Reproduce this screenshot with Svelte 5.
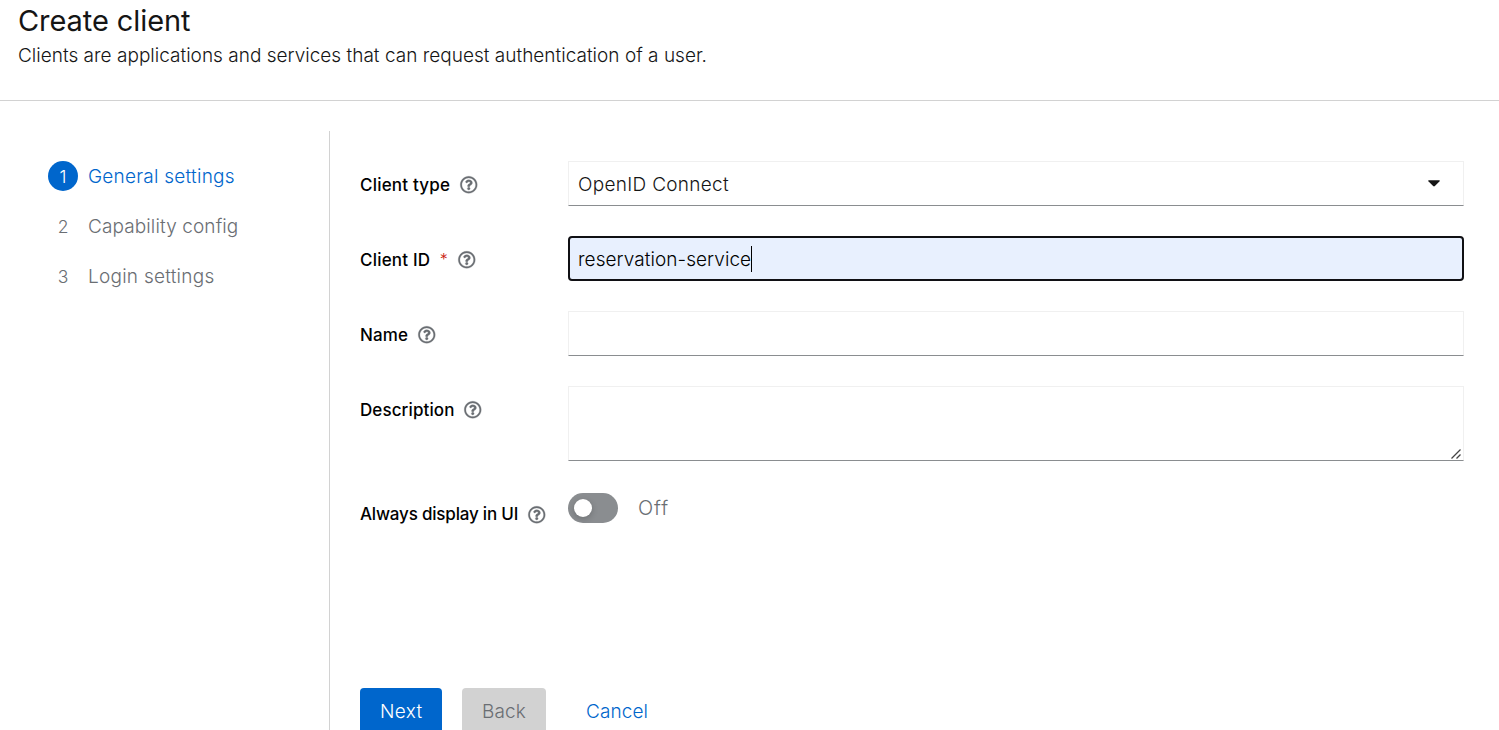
<script>
  const steps = [
    { label: 'General settings', tracking: 0.24 },
    { label: 'Capability config', tracking: 0.11 },
    { label: 'Login settings', tracking: 0.25 }
  ];
  let current = $state(0);
</script>

{#snippet help()}
  <svg class="help" viewBox="0 0 512 512" aria-hidden="true">
    <path d="M256 8C119.043 8 8 119.083 8 256c0 136.997 111.043 248 248 248s248-111.003 248-248C504 119.083 392.957 8 256 8zm0 448c-110.532 0-200-89.431-200-200 0-110.495 89.472-200 200-200 110.491 0 200 89.471 200 200 0 110.53-89.431 200-200 200zm107.244-255.2c0 67.052-72.421 68.084-72.421 92.863V300c0 6.627-5.373 12-12 12h-45.647c-6.627 0-12-5.373-12-12v-8.659c0-35.745 27.1-50.034 47.579-61.516 17.561-9.845 28.324-16.541 28.324-29.579 0-17.246-21.999-28.693-39.784-28.693-23.189 0-33.894 10.977-48.942 29.969-4.057 5.12-11.46 6.071-16.666 2.124l-27.824-21.098c-5.107-3.872-6.251-11.066-2.644-16.363C184.846 131.491 214.94 112 261.794 112c49.071 0 101.45 38.304 101.45 88.8zM298 368c0 23.159-18.841 42-42 42s-42-18.841-42-42 18.841-42 42-42 42 18.841 42 42z" />
  </svg>
{/snippet}

<div class="page">
  <header>
    <h1>Create client</h1>
    <p>Clients are applications and services that can request authentication of a user.</p>
  </header>
  <div class="wizard">
    <nav>
      {#each steps as step, i}
        <div class="step" class:active={i === current}>
          <span class="num">{i + 1}</span><span style="letter-spacing: {step.tracking}px">{step.label}</span>
        </div>
      {/each}
    </nav>
    <main>
      <form>
        <div class="row">
          <div class="label"><span>Client type</span>{@render help()}</div>
          <div class="control select"><span>OpenID Connect</span>
            <svg class="caret" viewBox="0 0 12 7"><path d="M0.8 0.2H11.2Q12.2 0.4 11.6 1.2L6.9 6.1Q6 6.9 5.1 6.1L0.4 1.2Q-0.2 0.4 0.8 0.2Z" /></svg>
          </div>
        </div>
        <div class="row">
          <div class="label"><span>Client ID</span><span class="req">*</span>{@render help()}</div>
          <div class="control focused"><span>reservation-service</span><i class="cursor"></i></div>
        </div>
        <div class="row">
          <div class="label name"><span>Name</span>{@render help()}</div>
          <div class="control"></div>
        </div>
        <div class="row">
          <div class="label description"><span>Description</span>{@render help()}</div>
          <div class="control area">
            <svg class="grip" viewBox="0 0 10 10"><path d="M0.5 9.5L9.5 0.5M5.5 9.5L9.5 5.5" /></svg>
          </div>
        </div>
        <div class="row">
          <div class="label always"><span>Always display in UI</span>{@render help()}</div>
          <div class="toggle"><span class="track"><span class="knob"></span></span><span class="off">Off</span></div>
        </div>
      </form>
      <footer>
        <button class="primary">Next</button>
        <button class="disabled">Back</button>
        <button class="link">Cancel</button>
      </footer>
    </main>
  </div>
</div>

<style>
  :global(body) { background: #fff; }
  .page { height: 730px; overflow: hidden; display: flex; flex-direction: column; font-family: Inter, sans-serif; font-size: 19px; font-weight: 300; color: #151515; }
  header { box-sizing: border-box; flex: none; height: 101px; padding: 2px 18px 0; border-bottom: 1px solid #d2d2d2; }
  h1 { margin: 0; font-size: 29px; line-height: 37px; font-weight: 400; letter-spacing: -0.08px; }
  p { margin: 0; line-height: 34px; letter-spacing: 0.012px; }
  .wizard { flex: 1; display: flex; margin-top: 30px; }
  nav { box-sizing: border-box; width: 330px; padding: 30px 0 0 48px; border-right: 1px solid #d2d2d2; display: flex; flex-direction: column; gap: 20px; }
  .step { display: flex; align-items: center; gap: 10px; height: 30px; color: #6a6e73; }
  .num { width: 30px; height: 30px; border-radius: 50%; text-align: center; line-height: 31px; font-size: 17.5px; }
  .active { color: #06c; }
  .active .num { background: #06c; color: #fff; }
  main { flex: 1; display: flex; flex-direction: column; padding: 30px 35px 0 30px; }
  form { height: 527px; flex: none; display: flex; flex-direction: column; gap: 30px; }
  .row { display: grid; grid-template-columns: 208px 1fr; }
  .label { display: flex; align-items: center; height: 47px; margin-bottom: -2px; font-size: 17px; font-weight: 500; letter-spacing: 0.2px; color: #000; }
  .name { letter-spacing: 0.1px; }
  .description { letter-spacing: 0.1px; }
  .always { letter-spacing: -0.19px; }
  .always span { margin-bottom: 2px; }
  .help { width: 17.5px; height: 17.5px; fill: #6a6e73; stroke: #6a6e73; stroke-width: 8; overflow: visible; margin-left: 9.8px; }
  .req { color: #c9190b; font-size: 16px; font-weight: 300; margin: 0 0 1px 9.5px; }
  .control { box-sizing: border-box; height: 45px; border: 1px solid #f0f0f0; border-bottom-color: #8a8d90; display: flex; align-items: center; padding: 1px 9px 0; }
  .select { justify-content: space-between; padding-right: 23px; letter-spacing: 0.3px; }
  .caret { width: 12px; height: 7px; fill: #151515; margin-bottom: 1px; }
  .focused { border: 2px solid #101014; border-radius: 4px; background: #e8f0fe; padding: 1px 8px 0; color: #000; letter-spacing: 0.06px; }
  .cursor { width: 1px; height: 26px; background: #000; }
  .area { height: 75px; align-items: flex-end; justify-content: flex-end; padding: 0 2px 1px; }
  .grip { width: 10px; height: 10px; fill: none; stroke: #444; stroke-width: 1.3; }
  .toggle { display: flex; gap: 20px; height: 30px; align-items: center; margin-top: 2px; }
  .track { box-sizing: border-box; width: 50px; height: 30px; border-radius: 15px; background: #8a8d90; padding: 6px; }
  .knob { display: block; width: 18px; height: 18px; border-radius: 50%; background: #fff; box-shadow: 0 2px 6px rgba(3, 3, 3, 0.2); }
  .off { color: #6a6e73; font-size: 20px; letter-spacing: 0.9px; }
  footer { display: flex; gap: 20px; }
  button { height: 45px; border: 0; border-radius: 4px; font: inherit; padding: 1px 20px 0; background: none; flex: none; }
  .primary { background: #06c; color: #fff; width: 82px; letter-spacing: 0.4px; }
  .disabled { background: #d2d2d2; color: #6a6e73; width: 84px; letter-spacing: 0.1px; }
  .link { color: #06c; letter-spacing: 0.1px; }
</style>
